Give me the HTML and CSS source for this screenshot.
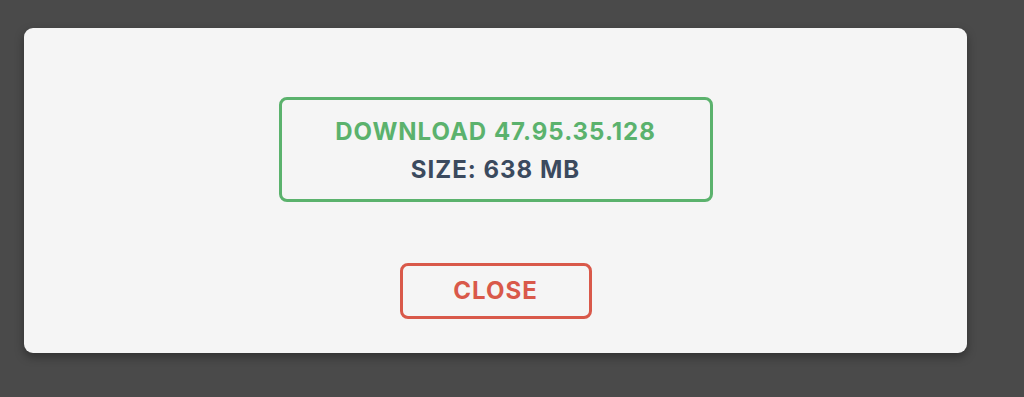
FILE: index.html
```html
<!DOCTYPE html>
<html>
<head>
<meta charset="utf-8">
<link rel="stylesheet" href="styles.css">
</head>
<body>
<div class="overlay">
  <div class="dialog">
    <div class="download">
      <div class="title">DOWNLOAD 47.95.35.128</div>
      <div class="size">SIZE: 638 MB</div>
    </div>
    <button class="close">CLOSE</button>
  </div>
</div>
</body>
</html>
```
FILE: styles.css
```css
html, body {
  margin: 0;
  padding: 0;
  background: #4a4a4a;
  width: 1024px;
  height: 397px;
  overflow: hidden;
  font-family: Inter, "Liberation Sans", Arial, sans-serif;
}
.overlay {
  padding: 28px 0 0 24px;
}
.dialog {
  width: 943px;
  height: 325px;
  box-sizing: border-box;
  background: #f5f5f5;
  border-radius: 9px;
  box-shadow: 0 4px 10px rgba(0,0,0,0.35);
  display: flex;
  flex-direction: column;
  align-items: center;
  padding-top: 69px;
}
.download {
  width: 434px;
  height: 105px;
  box-sizing: border-box;
  border: 3px solid #5bb26d;
  border-radius: 8px;
  display: flex;
  flex-direction: column;
  align-items: center;
  padding-top: 13px;
  font-weight: 700;
  font-size: 24px;
  letter-spacing: 1px;
}
.title {
  color: #5bb26d;
  line-height: 38px;
}
.size {
  color: #3b4a5e;
  line-height: 38px;
}
.close {
  margin-top: 61px;
  width: 192px;
  height: 56px;
  box-sizing: border-box;
  border: 3px solid #d9594a;
  border-radius: 8px;
  background: transparent;
  color: #d9594a;
  font-family: Inter, "Liberation Sans", Arial, sans-serif;
  font-weight: 700;
  font-size: 24px;
  letter-spacing: 1px;
  line-height: 50px;
  padding: 0;
}
```
